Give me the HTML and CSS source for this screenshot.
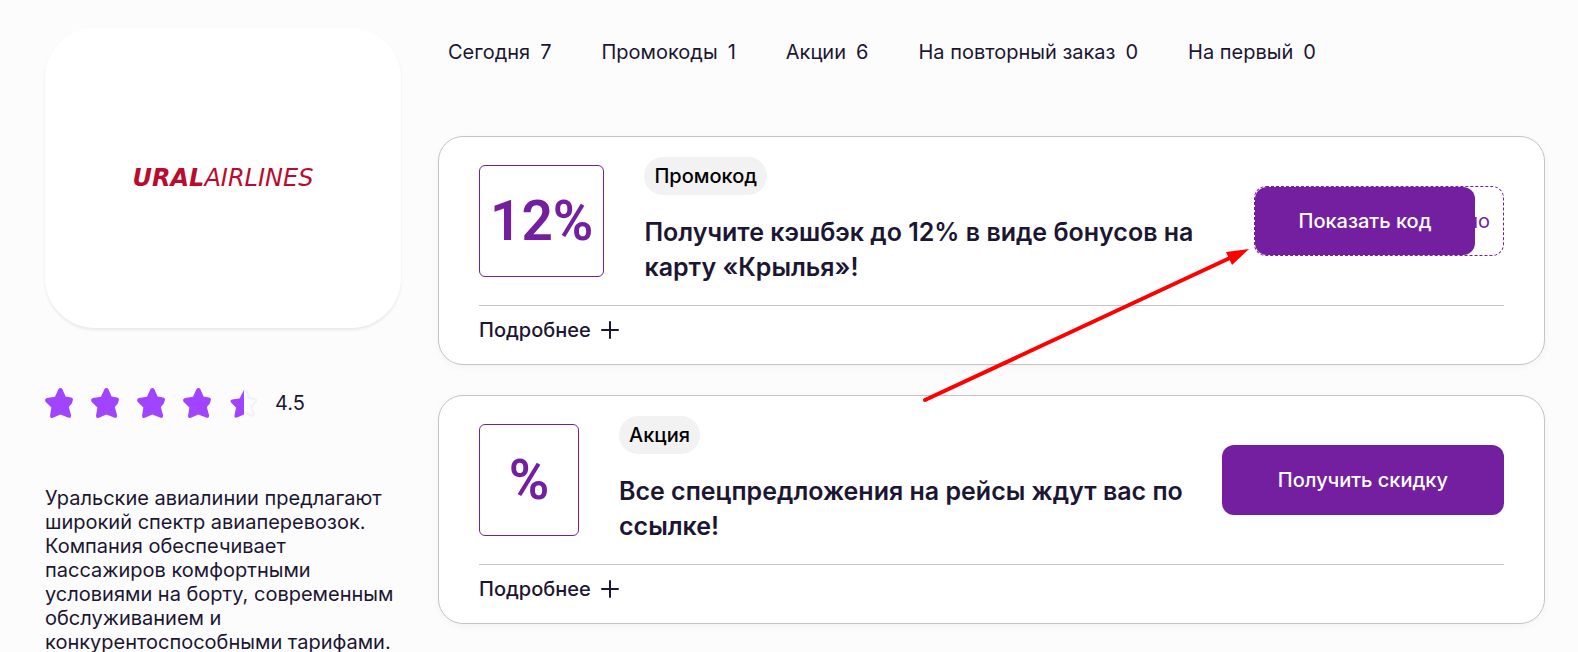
FILE: index.html
```
<!DOCTYPE html>
<html lang="ru">
<head>
  <meta charset="UTF-8">
  <meta name="viewport" content="width=device-width, initial-scale=1.0">
  <title>Уральские авиалинии – промокоды и акции</title>
  <link rel="stylesheet" href="styles.css">
</head>
<body>
  <svg width="0" height="0" class="sprite">
    <symbol id="star" viewBox="0 0 28 30">
      <path d="M13.4 1.2C14.2-.3 16.6-.3 17.4 1.2L20.6 8.6L26 9.4C27.8 9.8 28.3 11 27.6 13L26.8 15.5L23.8 19L26 27C26.3 29.3 25 30.3 23 29.6L15.3 26.6L8 29.8C6 30.4 4.8 29.3 5.1 27.3L6.4 19.5L1 14.2C-.5 12.5-.1 10.8 2 10L10 8.8Z"/>
    </symbol>
  </svg>

  <div class="page">
    <aside class="sidebar">
      <div class="logo-card">
        <div class="logo"><b>URAL</b><span>AIRLINES</span></div>
      </div>

      <div class="rating">
        <svg class="star"><use href="#star"/></svg>
        <svg class="star"><use href="#star"/></svg>
        <svg class="star"><use href="#star"/></svg>
        <svg class="star"><use href="#star"/></svg>
        <svg class="star" viewBox="0 0 28 30">
          <path class="star-empty" d="M15 3C16 2.200 17.500 2.800 18 4L20 10L26 11C27.500 11.400 27.600 12.800 26.500 14L22.500 18.500L24.500 26C24.500 27.700 23.300 28 22 27.500L15 24"/>
          <path d="M15 2V26.500L8 29.500C6 30 5 29 5.500 27.500L7 19.500L2 14.500C1 13 1.500 12 3 11.600L10.500 10.600Z"/>
        </svg>
        <span class="rating-value">4.5</span>
      </div>

      <p class="about">Уральские авиалинии предлагают широкий спектр авиаперевозок. Компания обеспечивает пассажиров комфортными условиями на борту, современным обслуживанием и конкурентоспособными тарифами.</p>
    </aside>

    <main class="content">
      <nav class="tabs">
        <a href="#">Сегодня <span>7</span></a>
        <a href="#">Промокоды <span>1</span></a>
        <a href="#">Акции <span>6</span></a>
        <a href="#">На повторный заказ <span>0</span></a>
        <a href="#">На первый <span>0</span></a>
      </nav>

      <div class="offers">
        <article class="offer">
          <div class="offer-body">
            <div class="discount">12%</div>
            <div class="offer-text">
              <span class="badge">Промокод</span>
              <h2>Получите кэшбэк до 12% в виде бонусов на карту «Крылья»!</h2>
            </div>
            <div class="code">
              <span>но</span>
              <button class="btn btn-code" type="button">Показать код</button>
            </div>
          </div>
          <button class="more" type="button">Подробнее
            <svg width="18" height="18"><path d="M9 1V17M1 9H17"/></svg>
          </button>
        </article>

        <article class="offer">
          <div class="offer-body">
            <div class="discount">%</div>
            <div class="offer-text">
              <span class="badge">Акция</span>
              <h2>Все спецпредложения на рейсы ждут вас по ссылке!</h2>
            </div>
            <button class="btn" type="button">Получить скидку</button>
          </div>
          <button class="more" type="button">Подробнее
            <svg width="18" height="18"><path d="M9 1V17M1 9H17"/></svg>
          </button>
        </article>

        <!-- pointer to the code button -->
        <svg class="arrow" width="330" height="160" viewBox="0 0 330 160">
          <path d="M5 154L312 11"/>
          <polygon points="329,3 306,6 312,19"/>
        </svg>
      </div>
    </main>
  </div>
</body>
</html>
```
FILE: styles.css
```
:root {
  --bg: #fcfcfc;
  --text: #1c1633;
  --purple: #731f9f;
  --star: #a044ff;
  --line: #c4c4c4;
}
* {
  box-sizing: border-box;
}
body {
  margin: 0;
  background: var(--bg);
  color: var(--text);
  font-family: Inter, "Liberation Sans", sans-serif;
  font-size: 20px;
  line-height: 24px;
}
button {
  font: inherit;
  border: none;
  cursor: pointer;
}
.sprite {
  position: absolute;
}
.page {
  display: flex;
  gap: 37px;
  padding: 28px 33px 0 45px;
}

/* sidebar */
.sidebar {
  flex: 0 0 356px;
}
.logo-card {
  display: flex;
  align-items: center;
  justify-content: center;
  height: 300px;
  background: #fff;
  border-radius: 50px;
  box-shadow: 0 2px 3px rgba(0, 0, 0, 0.08);
}
.logo {
  color: #ba0c2f;
  font-family: "DejaVu Sans", sans-serif;
  font-size: 24px;
  font-style: italic;
}
.logo span {
  font-weight: 200;
}
.rating {
  display: flex;
  align-items: center;
  gap: 18px;
  margin-top: 60px;
}
.star {
  width: 28px;
  height: 30px;
  fill: var(--star);
}
.star-empty {
  fill: none;
  stroke: #f3f1f5;
  stroke-width: 2;
}
.about {
  margin: 68px 0 0;
}

/* offers */
.content {
  flex: 1;
  min-width: 0;
}
.tabs {
  display: flex;
  gap: 50px;
  padding: 12px 10px 72px;
}
.tabs a {
  display: flex;
  gap: 10px;
  color: inherit;
  text-decoration: none;
}
.offers {
  position: relative;
  display: flex;
  flex-direction: column;
  gap: 30px;
  padding-bottom: 30px;
}
.offer {
  padding: 20px 40px 0;
  background: #fff;
  border: 1px solid var(--line);
  border-radius: 25px;
  box-shadow: 0 2px 8px rgba(0, 0, 0, 0.04);
}
.offer-body {
  display: flex;
  align-items: center;
  padding-bottom: 20px;
  border-bottom: 1px solid var(--line);
}
.discount {
  display: flex;
  align-items: center;
  justify-content: center;
  min-width: 100px;
  height: 112px;
  margin-right: 40px;
  padding: 0 10px;
  border: 1px solid var(--purple);
  border-radius: 6px;
  color: var(--purple);
  font-family: Roboto, sans-serif;
  font-size: 55px;
  font-weight: 600;
}
.offer-text {
  flex: 1;
  padding-right: 30px;
}
.badge {
  display: inline-block;
  padding: 7px 10px;
  border-radius: 19px;
  background: #f2f2f2;
  color: #000;
  font-weight: 500;
}
.offer-text h2 {
  margin: 20px 0 0;
  font-size: 25px;
  font-weight: 600;
  line-height: 35px;
}
.btn {
  height: 70px;
  padding: 0 56px;
  border-radius: 12px;
  background: var(--purple);
  color: #fff;
  font-weight: 500;
}
.code {
  position: relative;
  display: flex;
  align-items: center;
  justify-content: flex-end;
  width: 250px;
  height: 70px;
  padding-right: 13px;
  border: 1px dashed var(--purple);
  border-radius: 12px;
  color: var(--purple);
}
.btn-code {
  position: absolute;
  inset: 0 28px 0 0;
  height: auto;
  padding: 0;
}
.more {
  display: flex;
  align-items: center;
  gap: 10px;
  padding: 12px 0 22px;
  background: none;
  color: var(--text);
  font-weight: 500;
}
.more svg {
  fill: none;
  stroke: currentColor;
  stroke-width: 2;
  stroke-linecap: round;
}
.arrow {
  position: absolute;
  top: 110px;
  right: 295px;
  fill: #f00;
  pointer-events: none;
}
.arrow path {
  stroke: #f00;
  stroke-width: 4;
  stroke-linecap: round;
}
```
